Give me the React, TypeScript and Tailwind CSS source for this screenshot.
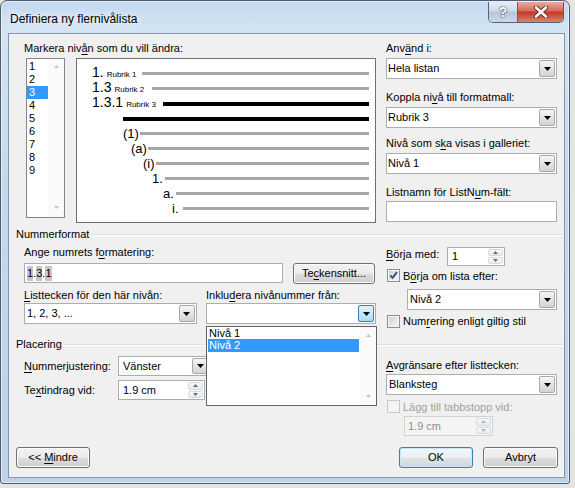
import React from "react";

type RN = React.ReactNode;

function U({ children }: { children: RN }) {
  return <span className="underline decoration-1 underline-offset-[2px]">{children}</span>;
}

function DownTri({ color = "#000" }: { color?: string }) {
  return (
    <svg width="7" height="4" viewBox="0 0 7 4">
      <path d="M0 0H7L3.5 4Z" fill={color} />
    </svg>
  );
}

function SmallTri({ up, color }: { up: boolean; color: string }) {
  return (
    <svg width="5" height="3" viewBox="0 0 5 3">
      <path d={up ? "M0 3H5L2.5 0Z" : "M0 0H5L2.5 3Z"} fill={color} />
    </svg>
  );
}

function DropBtn({ hot = false }: { hot?: boolean }) {
  return (
    <div
      className={
        hot
          ? "flex w-[16px] shrink-0 items-center justify-center rounded-[2px] border border-[#3c7fb1] bg-gradient-to-b from-[#e3f4fc] to-[#a9dbf6]"
          : "flex w-[16px] shrink-0 items-center justify-center rounded-[2px] border border-[#a8a8a8] bg-gradient-to-b from-[#f5f5f5] to-[#d3d3d3]"
      }
    >
      <DownTri />
    </div>
  );
}

function Select({
  value,
  className = "",
  pad = "pl-[1px]",
  hot = false,
}: {
  value: RN;
  className?: string;
  pad?: string;
  hot?: boolean;
}) {
  return (
    <div className={"flex border border-[#abadb3] bg-white p-[1px] " + className}>
      <div className={"flex flex-1 items-center overflow-hidden whitespace-nowrap " + pad}>{value}</div>
      <DropBtn hot={hot} />
    </div>
  );
}

function Spin({
  value,
  className = "",
  pad = "pl-[3px]",
  disabled = false,
}: {
  value: RN;
  className?: string;
  pad?: string;
  disabled?: boolean;
}) {
  return (
    <div
      className={
        (disabled
          ? "flex border border-[#d2d2d2] bg-[#f4f4f4] p-[1px] text-[#8f8f8f] "
          : "flex border border-[#abadb3] bg-white p-[1px] ") + className
      }
    >
      <div className={"flex flex-1 items-center whitespace-nowrap " + pad}>{value}</div>
      <div className="flex w-[15px] shrink-0 flex-col gap-[1px]">
        <div className="flex flex-1 items-center justify-center rounded-[2px] border border-[#d6dbe2] bg-gradient-to-b from-[#f8fafc] to-[#e6eaef]">
          <SmallTri up color={disabled ? "#b5b5b5" : "#5f6e84"} />
        </div>
        <div className="flex flex-1 items-center justify-center rounded-[2px] border border-[#d6dbe2] bg-gradient-to-b from-[#f8fafc] to-[#e6eaef]">
          <SmallTri up={false} color={disabled ? "#b5b5b5" : "#5f6e84"} />
        </div>
      </div>
    </div>
  );
}

function Check({ checked = false, disabled = false }: { checked?: boolean; disabled?: boolean }) {
  return (
    <div
      className={
        disabled
          ? "flex h-[13px] w-[13px] shrink-0 items-center justify-center border border-[#c8c8c8] bg-[#f4f4f4]"
          : "flex h-[13px] w-[13px] shrink-0 items-center justify-center border border-[#8e8f8f] bg-gradient-to-br from-[#cdd1d6] to-[#f7f7f7] shadow-[inset_0_0_0_1px_#f4f4f4]"
      }
    >
      {checked && (
        <svg width="9" height="9" viewBox="0 0 9 9">
          <path d="M1.2 4.3L3.6 6.8L8 1.2" stroke="#3a4e7d" strokeWidth="1.9" fill="none" />
        </svg>
      )}
    </div>
  );
}

function Btn({ children, className = "", def = false }: { children: RN; className?: string; def?: boolean }) {
  return (
    <div
      className={
        (def
          ? "flex items-center justify-center rounded-[3px] border border-[#3c7fb1] bg-[linear-gradient(#f4f8fb_0%,#eceff2_50%,#dfe3e7_51%,#d3d8dd_100%)] shadow-[inset_0_0_0_1px_#c4e6f9] "
          : "flex items-center justify-center rounded-[3px] border border-[#707070] bg-[linear-gradient(#f2f2f2_0%,#ebebeb_50%,#dddddd_51%,#cfcfcf_100%)] shadow-[inset_0_0_0_1px_#fbfbfb] ") +
        className
      }
    >
      <span className="whitespace-pre">{children}</span>
    </div>
  );
}

type Row = { num: string; rub?: string; textX: number; lineX: number; big?: boolean; black?: boolean };

const rows: Row[] = [
  { num: "1.", rub: "Rubrik 1", textX: 92, lineX: 142, big: true },
  { num: "1.3", rub: "Rubrik 2", textX: 92, lineX: 152, big: true },
  { num: "1.3.1", rub: "Rubrik 3", textX: 92, lineX: 163, big: true, black: true },
  { num: "", textX: 92, lineX: 123, black: true },
  { num: "(1)", textX: 123, lineX: 140 },
  { num: "(a)", textX: 131, lineX: 148 },
  { num: "(i)", textX: 143, lineX: 156 },
  { num: "1.", textX: 152, lineX: 165 },
  { num: "a.", textX: 163, lineX: 176 },
  { num: "i.", textX: 172, lineX: 183 },
];

function Preview() {
  return (
    <div className="ml-[11px] h-[165px] w-[300px] border border-[#707070] bg-white pt-[7px] pr-[6px]">
      {rows.map((r, i) => (
        <div key={i} className="flex h-[15px] items-center">
          <div className="flex shrink-0 items-baseline whitespace-nowrap" style={{ width: r.lineX - 77, paddingLeft: r.textX - 77 }}>
            {r.num && (
              <span className={r.big ? "text-[14px] leading-[15px]" : "text-[13px] leading-[15px]"}>{r.num}</span>
            )}
            {r.rub && <span className="ml-[3px] text-[8px] leading-[15px]">{r.rub}</span>}
          </div>
          <div className={r.black ? "h-[4px] flex-1 bg-black" : "h-[3px] flex-1 bg-[#a6a6a6]"} />
        </div>
      ))}
    </div>
  );
}

function LevelList() {
  const items = ["1", "2", "3", "4", "5", "6", "7", "8", "9"];
  return (
    <div className="ml-[2px] flex h-[160px] w-[39px] border border-[#828790] bg-white">
      <div className="w-[21px] pt-[1px]">
        {items.map((it) => (
          <div
            key={it}
            className={
              it === "3"
                ? "h-[13px] bg-[#3399ff] pl-[2px] leading-[13px] text-white"
                : "h-[13px] pl-[2px] leading-[13px]"
            }
          >
            {it}
          </div>
        ))}
      </div>
      <div className="flex flex-1 flex-col justify-between bg-[#fafafa] pb-[8px] pt-[6px]">
        <div className="flex justify-center">
          <SmallTri up color="#c3c3c3" />
        </div>
        <div className="flex justify-center">
          <SmallTri up={false} color="#c3c3c3" />
        </div>
      </div>
    </div>
  );
}

function Heading({ children, gap }: { children: RN; gap: string }) {
  return (
    <div className={"flex h-[15px] items-center pl-[7px] pr-[1px] " + gap}>
      <span className="whitespace-nowrap">{children}</span>
      <div className="ml-[2px] h-[2px] flex-1 border-t border-b border-t-[#d5dfe5] border-b-white" />
    </div>
  );
}

export default function App() {
  return (
    <div className="h-[488px] w-[575px] overflow-hidden bg-[#e4e4e4] font-['Liberation_Sans',Arial,sans-serif] text-[11px] leading-[15px] text-black">
      <div className="h-[484px] w-[570px] rounded-t-[7px] rounded-b-[3px] border border-[#4f5c6b] bg-[linear-gradient(180deg,#c3d8ef_0%,#d4e4f5_6%,#c4d8ee_40%,#bcd2ea_100%)] shadow-[inset_0_0_0_1px_rgba(255,255,255,0.55)]">
        <div className="flex h-[32px] items-start justify-between">
          <div className="pl-[9px] pt-[11px] text-[12px] leading-[15px] [text-shadow:0_0_6px_#ffffff,0_0_10px_#ffffff]">
            Definiera ny flernivålista
          </div>
          <div className="mr-[5px] mt-[1px] flex h-[21px] overflow-hidden rounded-b-[5px] border border-t-0 border-[#52647a]">
            <div className="flex w-[29px] items-center justify-center border-r border-[#52647a] bg-[linear-gradient(#e5edf7_0%,#cfdbea_45%,#b4c5da_50%,#cbd9e9_100%)]">
              <span className="text-[14px] font-bold leading-[14px] text-white [text-shadow:0_0_1px_#2e3f56,0_0_2px_#2e3f56]">
                ?
              </span>
            </div>
            <div className="flex w-[45px] items-center justify-center bg-[linear-gradient(#eaab9c_0%,#d66a59_45%,#c3392a_50%,#d9826f_100%)]">
              <svg width="16" height="12" viewBox="0 0 16 12">
                <path d="M3 1.5L13 10.5M13 1.5L3 10.5" stroke="#5a1a12" strokeWidth="4.2" strokeLinecap="round" />
                <path d="M3 1.5L13 10.5M13 1.5L3 10.5" stroke="#ffffff" strokeWidth="2.6" strokeLinecap="round" />
              </svg>
            </div>
          </div>
        </div>

        <div className="relative ml-[7px] mr-[4px] flex h-[445px] flex-col border border-[#8396ad] bg-[#f0f0f0]">
          {/* Section 1 */}
          <div className="flex gap-[10px] pl-[15px] pr-[6px] pt-[7px]">
            <div className="w-[352px] shrink-0">
              <div className="h-[15px]">
                Markera niv<U>å</U>n som du vill ändra:
              </div>
              <div className="mt-[2px] flex items-start">
                <LevelList />
                <Preview />
              </div>
            </div>
            <div className="w-[171px] shrink-0">
              <div className="h-[15px]">
                Anv<U>ä</U>nd i:
              </div>
              <Select value="Hela listan" className="mt-[2px] h-[21px]" pad="pl-0" />
              <div className="mt-[11px] h-[15px]">
                Koppla ni<U>v</U>å till formatmall:
              </div>
              <Select value="Rubrik 3" className="mt-[2px] h-[21px]" pad="pl-0" />
              <div className="mt-[8px] h-[15px]">
                Nivå som s<U>k</U>a visas i galleriet:
              </div>
              <Select value="Nivå 1" className="mt-[2px] h-[21px]" pad="pl-0" />
              <div className="mt-[11px] h-[15px]">
                Listnamn för ListN<U>u</U>m-fält:
              </div>
              <div className="mt-[1px] h-[21px] border border-[#abadb3] bg-white" />
            </div>
          </div>

          <Heading gap="mt-[4px]">Nummerformat</Heading>

          {/* Section 2 */}
          <div className="flex gap-[10px] pl-[15px] pr-[6px]">
            <div className="w-[352px] shrink-0">
              <div className="mt-[3px] h-[15px]">
                Ange numrets f<U>o</U>rmatering:
              </div>
              <div className="mt-[3px] flex items-start">
                <div className="flex h-[20px] w-[259px] items-center border border-[#abadb3] bg-white pl-[2px]">
                  <span className="bg-[#c6c6c6]">1</span>.<span className="bg-[#c6c6c6]">3</span>.
                  <span className="bg-[#c6c6c6]">1</span>
                </div>
                <Btn className="ml-[10px] h-[21px] w-[82px]">
                  Te<U>c</U>kensnitt...
                </Btn>
              </div>
              <div className="mt-[4px] flex">
                <div className="h-[15px] w-[182px]">
                  <U>L</U>isttecken för den här nivån:
                </div>
                <div className="h-[15px]">
                  Inklu<U>d</U>era nivånummer från:
                </div>
              </div>
              <div className="flex gap-[9px]">
                <Select value="1, 2, 3, ..." className="h-[21px] w-[173px]" />
                <Select value="" className="h-[21px] w-[171px]" hot />
              </div>
            </div>
            <div className="w-[171px] shrink-0">
              <div className="mt-[5px] flex h-[19px] items-start">
                <div className="w-[61px]">
                  <U>B</U>örja med:
                </div>
                <Spin value="1" className="h-[19px] w-[58px]" />
              </div>
              <div className="mt-[3px] flex h-[15px] items-start pl-[1px]">
                <Check checked />
                <span className="ml-[3px]">
                  B<U>ö</U>rja om lista efter:
                </span>
              </div>
              <Select value="Nivå 2" className="ml-[21px] mt-[5px] h-[21px] w-[150px]" />
              <div className="mt-[4px] flex h-[15px] items-start pl-[1px]">
                <div className="mt-[1px]">
                  <Check />
                </div>
                <span className="ml-[3px]">
                  Num<U>r</U>ering enligt giltig stil
                </span>
              </div>
            </div>
          </div>

          <Heading gap="mt-[8px]">Placering</Heading>

          {/* Section 3 */}
          <div className="flex gap-[10px] pl-[15px] pr-[6px]">
            <div className="w-[352px] shrink-0">
              <div className="mt-[4px] flex h-[20px] items-center">
                <div className="w-[94px]">
                  <U>N</U>ummerjustering:
                </div>
                <Select value="Vänster" className="h-[20px] w-[92px]" pad="pl-[3px]" />
              </div>
              <div className="mt-[4px] flex h-[20px] items-center">
                <div className="w-[94px]">
                  Te<U>x</U>tindrag vid:
                </div>
                <Spin value="1.9 cm" className="h-[20px] w-[87px]" pad="pl-[3px]" />
              </div>
            </div>
            <div className="w-[171px] shrink-0">
              <div className="mt-[6px] h-[15px]">
                <U>A</U>vgränsare efter listtecken:
              </div>
              <Select value="Blanksteg" className="mt-[1px] h-[21px]" />
              <div className="mt-[5px] flex h-[15px] items-start pl-[1px]">
                <Check disabled />
                <span className="ml-[3px] text-[#a0a0a0]">Lägg till tabbstopp vid:</span>
              </div>
              <Spin value="1.9 cm" className="ml-[18px] mt-[1px] h-[20px] w-[89px]" pad="pl-[2px]" disabled />
            </div>
          </div>

          {/* Buttons */}
          <div className="mt-[11px] flex pl-[7px] pr-[6px]">
            <Btn className="h-[21px] w-[74px]">
              {"<< "}
              <U>M</U>indre
            </Btn>
            <div className="flex-1" />
            <Btn className="h-[21px] w-[74px]" def>
              OK
            </Btn>
            <Btn className="ml-[10px] h-[21px] w-[75px]">Avbryt</Btn>
          </div>

          {/* Open dropdown list */}
          <div className="absolute left-[197px] top-[292px] flex h-[80px] w-[171px] border border-[#646464] bg-white">
            <div className="flex-1 pl-[1px]">
              <div className="h-[12px] pl-[1px] leading-[12px]">Nivå 1</div>
              <div className="h-[13px] bg-[#3399ff] pl-[1px] leading-[13px] text-white">Nivå 2</div>
            </div>
            <div className="ml-[1px] flex w-[16px] flex-col justify-between bg-[#fafafa] pb-[7px] pt-[7px]">
              <div className="flex justify-center">
                <SmallTri up color="#c3c3c3" />
              </div>
              <div className="flex justify-center">
                <SmallTri up={false} color="#c3c3c3" />
              </div>
            </div>
          </div>
        </div>
      </div>
    </div>
  );
}
